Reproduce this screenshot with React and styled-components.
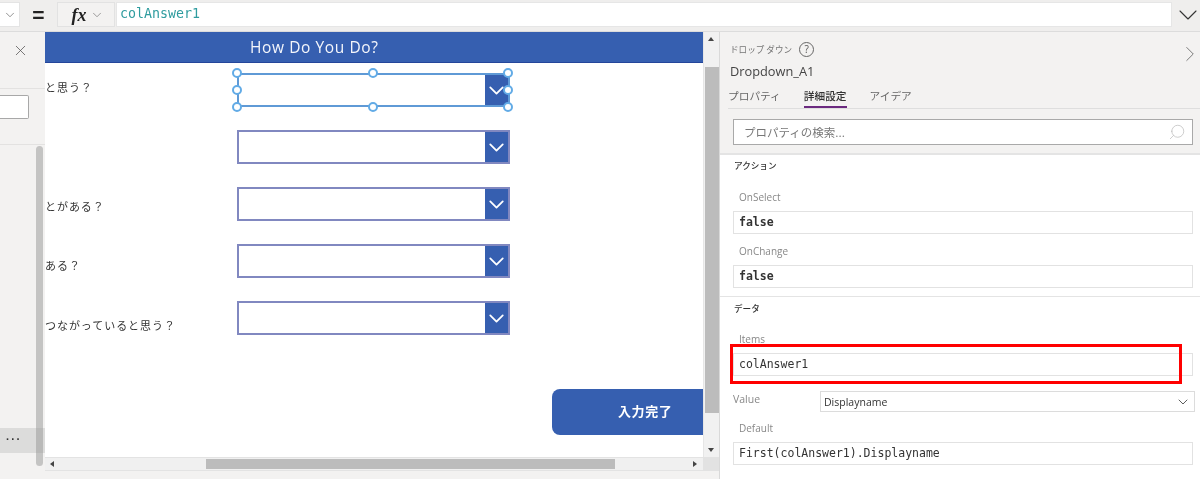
import React from "react";
import styled, { createGlobalStyle } from "styled-components";
import { ChevronDown, ChevronRight, X, Search } from "lucide-react";

const Global = createGlobalStyle`
  html, body { margin: 0; padding: 0; background: #f3f2f1; }
  body { font-family: "Open Sans", "Noto Sans CJK JP", sans-serif; }
  * { box-sizing: border-box; }
  svg { flex: none; }
`;

const jp = `"Noto Sans CJK JP", "Noto Sans", sans-serif`;
const mono = `"DejaVu Sans Mono", "Liberation Mono", monospace`;

const Page = styled.div`
  width: 1200px; height: 479px; overflow: hidden; position: relative;
  display: flex; flex-direction: column; background: #f3f2f1; color: #333;
  filter: blur(0.4px);
`;

/* formula bar */
const TopBar = styled.div`
  height: 32px; flex: none; display: flex; align-items: flex-start; padding-top: 2px;
  background: #efeeed; border-bottom: 1px solid #dcdcdc;
`;
const PropSelect = styled.div`
  width: 20px; flex: none; height: 25px; background: #fff; border: 1px solid #e4e4e4; border-left: 0;
  display: flex; align-items: center; justify-content: center; color: #666;
`;
const Equals = styled.div`
  width: 37px; flex: none; height: 25px; display: flex; align-items: center; justify-content: center;
  font: 700 21px "Liberation Sans", sans-serif; color: #222;
`;
const FxBox = styled.div`
  width: 58px; flex: none; height: 25px; background: #f3f2f1; border: 1px solid #e2e2e2; margin-right: 1px;
  display: flex; align-items: center; justify-content: center; gap: 3px; color: #777; padding-left: 3px;
`;
const Fx = styled.span`
  font: italic 700 18px "Liberation Serif", serif; color: #222; line-height: 1;
`;
const Formula = styled.div`
  width: 1056px; flex: none; height: 25px; background: #fff; border: 1px solid #e6e6e6; padding-left: 3px;
  font: 13.3px/22px ${mono}; color: #2f9c9f;
`;
const ExpandBar = styled.div`
  flex: 1; min-width: 0; height: 25px; display: flex; align-items: center; justify-content: flex-end; color: #333;
  margin-right: -4px;
`;

const Main = styled.div`
  flex: 1; display: flex; min-height: 0;
`;

/* left rail */
const Rail = styled.div`
  width: 45px; flex: none; position: relative; display: flex; flex-direction: column;
  background: #f3f2f1;
`;
const RailClose = styled.div`
  height: 57px; flex: none; display: flex; align-items: center; justify-content: flex-end;
  padding: 0 16px 20px 0; border-bottom: 1px solid #e3e2e1; color: #555;
`;
const RailSearchRow = styled.div`
  height: 56px; flex: none; padding-top: 6px; border-bottom: 1px solid #e3e2e1;
`;
const RailInput = styled.div`
  width: 29px; height: 24px; background: #fff; border: 1px solid #a8a8a8; border-left: 0; border-radius: 0 2px 2px 0;
`;
const RailMore = styled.div`
  margin-top: 283px; height: 25px; background: #dcdcdb; color: #333;
  font: 700 11px/22px "Liberation Sans", sans-serif; letter-spacing: 1.6px; padding-left: 6px;
`;
const RailThumb = styled.div`
  position: absolute; left: 36px; top: 114px; width: 7px; height: 320px; border-radius: 4px;
  background: rgba(150,150,150,.5);
`;

/* canvas */
const Stage = styled.div`
  width: 674px; flex: none; display: grid;
  grid-template-columns: 658px 16px; grid-template-rows: 425px 14px 1fr;
`;
const Canvas = styled.div`
  background: #fff; position: relative; overflow: hidden;
`;
const AppHeader = styled.div`
  height: 31px; background: #365fb0; border-bottom: 1px solid #24469a; color: #f4f6fb;
  font: 400 15.5px/30px "Open Sans", sans-serif; padding-left: 205px; letter-spacing: .6px;
`;
const Form = styled.div`
  display: flex; flex-direction: column; gap: 23px; padding-top: 10px;
`;
const FormRow = styled.div`
  display: flex; align-items: flex-start; height: 34px;
`;
const Question = styled.div`
  width: 192px; flex: none; padding-top: ${p => p.$top}px; white-space: nowrap;
  font: 11px/14px ${jp}; letter-spacing: .95px; color: #333;
`;
const Drop = styled.div`
  width: 273px; height: 34px; position: relative; display: flex; justify-content: flex-end;
  background: #fff; border: 2px solid ${p => (p.$selected ? "#5f9ad6" : "#8188c0")};
`;
const DropBtn = styled.div`
  width: 23px; background: #365fb0; color: #fff; display: flex; align-items: center; justify-content: center;
`;
const Handle = styled.span`
  position: absolute; width: 10px; height: 10px; border-radius: 50%; background: #fff;
  border: 2px solid #62abe6; left: ${p => p.$x}px; top: ${p => p.$y}px;
`;
const Submit = styled.div`
  position: absolute; left: 507px; top: 357px; width: 151px; height: 46px;
  background: #365fb0; border-radius: 8px 0 0 8px; color: #fff;
  font: 700 13px/44px ${jp}; letter-spacing: .6px; padding-left: 66px;
`;
const VScroll = styled.div`
  background: #f1f1f1; border-left: 1px solid #e6e6e6; display: flex; flex-direction: column; align-items: center;
  padding: 5px 0 0 0; position: relative;
`;
const VThumb = styled.div`
  position: absolute; top: 35px; left: 1px; width: 14px; height: 346px; background: #bcbcbc;
`;
const Arrow = styled.span`
  position: absolute; width: 0; height: 0; border: 3.5px solid transparent;
  ${p => p.$dir === "up" && `border-bottom: 4px solid #444; top: 2px; left: 4px;`}
  ${p => p.$dir === "down" && `border-top: 4px solid #444; bottom: 2px; left: 4px;`}
  ${p => p.$dir === "left" && `border-right: 4px solid #444; left: 2px; top: 3px;`}
  ${p => p.$dir === "right" && `border-left: 4px solid #444; right: 3px; top: 3px;`}
`;
const HScroll = styled.div`
  background: #f0f0f0; position: relative; border-top: 1px solid #e3e3e3; border-bottom: 1px solid #e3e3e3;
`;
const HThumb = styled.div`
  position: absolute; left: 161px; top: 1px; width: 409px; height: 10px; background: #bcbcbc;
`;
const Corner = styled.div`
  background: #e2e2e2;
`;
const BottomStrip = styled.div`
  grid-column: 1 / 3; background: #f3f2f1;
`;

/* right panel */
const Panel = styled.div`
  flex: 1; display: flex; flex-direction: column; border-left: 1px solid #d9d9d9; min-width: 0; position: relative;
`;
const PanelHead = styled.div`
  height: 122px; flex: none; background: #f3f2f1; border-bottom: 1px solid #e4e4e4; display: flex; flex-direction: column;
  position: relative;
`;
const TypeRow = styled.div`
  display: flex; align-items: center; gap: 7px; height: 16px; margin: 9px 0 0 10px;
  font: 8.6px/16px ${jp}; color: #777;
`;
const HelpMark = styled.span`
  width: 15px; height: 15px; border-radius: 50%; border: 1px solid #666; color: #555;
  display: inline-flex; align-items: center; justify-content: center; font: 10px/1 "Open Sans", sans-serif;
`;
const ControlName = styled.div`
  margin: 4px 0 0 10px; font: 12.8px/20px "Open Sans", sans-serif; color: #444;
`;
const Tabs = styled.div`
  display: flex; gap: 23px; margin: 0 0 0 8px; height: 28px; border-bottom: 1px solid #dedede;
`;
const Tab = styled.div`
  height: 27px; padding-top: 5px; font: 10.7px/20px ${jp}; color: ${p => (p.$active ? "#333" : "#666")};
  border-bottom: 2px solid ${p => (p.$active ? "#6b2a7f" : "transparent")};
  font-weight: ${p => (p.$active ? 500 : 400)};
`;
const PanelClose = styled.div`
  position: absolute; right: -3px; top: 9px; color: #777;
`;
const SearchBox = styled.div`
  margin: 10px 7px 0 13px; height: 26px; background: #fff; border: 1px solid #a9a9a9; display: flex; align-items: center;
  justify-content: space-between; padding: 0 6px 0 10px; font: 11.5px ${jp}; color: #777;
`;
const SearchGlyph = styled(Search)`
  transform: scaleX(-1); color: #bdbdbd;
`;
const Section = styled.div`
  background: #fff; border-top: 1px solid #e4e4e4; padding: 0 7px 0 13px; height: ${p => p.$h}px; flex: none;
`;
const SectionTitle = styled.div`
  font: 500 8.6px/14px ${jp}; color: #333; padding-top: ${p => p.$pad}px; padding-left: 1px; margin-bottom: ${p => p.$gap}px;
`;
const FieldLabel = styled.div`
  font: 10px/14px "Open Sans", sans-serif; color: #888; padding-left: 6px; margin-bottom: ${p => p.$gap || 6}px;
`;
const CodeBox = styled.div`
  height: 23px; border: 1px solid #e2e2e2; background: #fff; padding-left: 5px; margin-bottom: ${p => p.$gap || 0}px;
  font: ${p => p.$weight || 400} 11.5px/21px ${mono}; color: #333;
`;
const ValueRow = styled.div`
  display: flex; align-items: center; margin-bottom: 9px; height: 21px; margin-right: -2px;
`;
const ValueLabel = styled.div`
  width: 87px; flex: none; font: 10.5px "Open Sans", sans-serif; color: #888; padding-bottom: 6px;
`;
const ValueSelect = styled.div`
  flex: 1; height: 21px; border: 1px solid #dcdcdc; display: flex; align-items: center; justify-content: space-between;
  padding: 0 3px 0 3px; font: 10.5px "Open Sans", sans-serif; color: #333;
`;
const RedMark = styled.div`
  position: absolute; left: 10px; top: 312px; width: 452px; height: 40px; border: 3px solid #f00; pointer-events: none;
`;

const questions = [
  { text: "と思う？", top: 7 },
  { text: "", top: 0 },
  { text: "とがある？", top: 12 },
  { text: "ある？", top: 14 },
  { text: "つながっていると思う？", top: 17 },
];
const handles = [
  [-7, -7], [129, -7], [264, -7],
  [-7, 10], [264, 10],
  [-7, 27], [129, 27], [264, 27],
];

export default function App() {
  return (
    <Page>
      <Global />
      <TopBar>
        <PropSelect><ChevronDown size={14} strokeWidth={1.2} /></PropSelect>
        <Equals>=</Equals>
        <FxBox><Fx>fx</Fx><ChevronDown size={14} strokeWidth={1.2} /></FxBox>
        <Formula>colAnswer1</Formula>
        <ExpandBar><ChevronDown size={32} strokeWidth={0.8} /></ExpandBar>
      </TopBar>
      <Main>
        <Rail>
          <RailClose><X size={17} strokeWidth={1.1} /></RailClose>
          <RailSearchRow><RailInput /></RailSearchRow>
          <RailMore>···</RailMore>
          <RailThumb />
        </Rail>
        <Stage>
          <Canvas>
            <AppHeader>How Do You Do?</AppHeader>
            <Form>
              {questions.map((q, i) => (
                <FormRow key={i}>
                  <Question $top={q.top}>{q.text}</Question>
                  <Drop $selected={i === 0}>
                    <DropBtn><ChevronDown size={25} strokeWidth={1.7} /></DropBtn>
                    {i === 0 && handles.map(([x, y]) => <Handle key={`${x}-${y}`} $x={x} $y={y} />)}
                  </Drop>
                </FormRow>
              ))}
            </Form>
            <Submit>入力完了</Submit>
          </Canvas>
          <VScroll>
            <Arrow $dir="up" />
            <VThumb />
            <Arrow $dir="down" />
          </VScroll>
          <HScroll>
            <Arrow $dir="left" />
            <HThumb />
            <Arrow $dir="right" />
          </HScroll>
          <Corner />
          <BottomStrip />
        </Stage>
        <Panel>
          <PanelHead>
            <TypeRow>ドロップ ダウン <HelpMark>?</HelpMark></TypeRow>
            <ControlName>Dropdown_A1</ControlName>
            <Tabs>
              <Tab>プロパティ</Tab>
              <Tab $active>詳細設定</Tab>
              <Tab>アイデア</Tab>
            </Tabs>
            <PanelClose><ChevronRight size={26} strokeWidth={0.9} /></PanelClose>
            <SearchBox>プロパティの検索...<SearchGlyph size={18} strokeWidth={1} /></SearchBox>
          </PanelHead>
          <Section $h={142}>
            <SectionTitle $pad={3} $gap={18}>アクション</SectionTitle>
            <FieldLabel $gap={7}>OnSelect</FieldLabel>
            <CodeBox $weight={700} $gap={10}>false</CodeBox>
            <FieldLabel $gap={7}>OnChange</FieldLabel>
            <CodeBox $weight={700}>false</CodeBox>
          </Section>
          <Section $h={183}>
            <SectionTitle $pad={4} $gap={17}>データ</SectionTitle>
            <FieldLabel $gap={7}>Items</FieldLabel>
            <CodeBox $weight={500} $gap={15}>colAnswer1</CodeBox>
            <ValueRow>
              <ValueLabel>Value</ValueLabel>
              <ValueSelect>Displayname<ChevronDown size={16} strokeWidth={1.2} /></ValueSelect>
            </ValueRow>
            <FieldLabel $gap={7}>Default</FieldLabel>
            <CodeBox>First(colAnswer1).Displayname</CodeBox>
          </Section>
          <RedMark />
        </Panel>
      </Main>
    </Page>
  );
}
